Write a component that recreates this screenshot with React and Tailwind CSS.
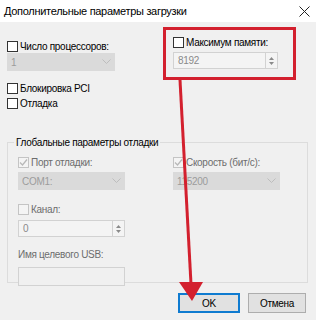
import React from 'react';

const Check = ({ checked, disabled }) => (
  <span
    className={`w-[11px] h-[11px] shrink-0 border flex items-center justify-center ${
      disabled ? 'border-[#c4c4c4] bg-[#f4f4f4]' : 'border-[#333] bg-white'
    }`}
  >
    {checked && (
      <svg width="9" height="9" viewBox="0 0 9 9">
        <path d="M1 4.5 L3.5 7 L8 1.5" fill="none" stroke="#b8b8b8" strokeWidth="1.3" />
      </svg>
    )}
  </span>
);

const CheckRow = ({ label, checked, disabled, className = '' }) => (
  <div className={`flex items-center gap-[2px] h-[12px] ${className}`}>
    <Check checked={checked} disabled={disabled} />
    <span className={disabled ? 'text-[#6d6d6d]' : 'text-black'}>{label}</span>
  </div>
);

const Select = ({ value, className = '' }) => (
  <div className={`h-[18px] bg-[#dadada] flex items-center justify-between px-[4px] ${className}`}>
    <span className="text-[#9c9c9c]">{value}</span>
    <svg width="9" height="6" viewBox="0 0 9 6">
      <path d="M0.5 0.5 L4.5 4.5 L8.5 0.5" fill="none" stroke="#bdbdbd" strokeWidth="1" />
    </svg>
  </div>
);

const Spin = ({ value, className = '' }) => (
  <div className={`h-[17px] bg-[#f4f4f4] border border-[#d2d2d2] flex items-center ${className}`}>
    <span className="flex-1 pl-[4px] text-[#8a8a8a]">{value}</span>
    <div className="w-[12px] h-full border-l border-[#d2d2d2] flex flex-col items-center justify-center gap-[2px]">
      <svg width="5" height="3" viewBox="0 0 5 3"><path d="M0 3 L2.5 0 L5 3 Z" fill="#8a8a8a" /></svg>
      <svg width="5" height="3" viewBox="0 0 5 3"><path d="M0 0 L2.5 3 L5 0 Z" fill="#8a8a8a" /></svg>
    </div>
  </div>
);

const App = () => {
  return (
    <div
      className="relative w-[316px] h-[320px] overflow-hidden bg-[#f0f0f0] text-[10px] leading-[13px] tracking-[-0.3px]"
      style={{ fontFamily: '"Liberation Sans", Arial, sans-serif' }}
    >
      {/* title bar */}
      <div className="h-[22px] bg-white flex items-center justify-between pl-[4px] pr-[6px]">
        <span className="text-[11px] text-black">Дополнительные параметры загрузки</span>
        <svg width="11" height="11" viewBox="0 0 11 11">
          <path d="M0.5 0.5 L10.5 10.5 M10.5 0.5 L0.5 10.5" stroke="#222" strokeWidth="1" />
        </svg>
      </div>

      <div className="px-[7px]">
        {/* top options */}
        <div className="flex pt-[5px] h-[114px]">
          <div className="w-[156px] pt-[13px]">
            <CheckRow label="Число процессоров:" />
            <Select value="1" className="w-[108px] mt-[1px]" />
            <CheckRow label="Блокировка PCI" className="mt-[11px]" />
            <CheckRow label="Отладка" className="mt-[3px]" />
          </div>
          <div className="w-[133px] h-[53px] border-[3px] border-[#d3202e] pl-[7px] pt-[6px]">
            <CheckRow label="Максимум памяти:" />
            <Spin value="8192" className="w-[105px] mt-[4px]" />
          </div>
        </div>

        {/* global debug settings */}
        <fieldset className="w-[301px] h-[147px] border border-[#dcdcdc] pl-[10px]">
          <legend className="ml-[-4px] px-[2px] text-black">Глобальные параметры отладки</legend>
          <div className="flex mt-[7px]">
            <div className="w-[155px]">
              <CheckRow label="Порт отладки:" checked disabled />
              <Select value="COM1:" className="w-[107px] mt-[4px]" />
            </div>
            <div>
              <CheckRow label="Скорость (бит/с):" checked disabled />
              <Select value="115200" className="w-[107px] mt-[4px]" />
            </div>
          </div>
          <CheckRow label="Канал:" disabled className="mt-[13px]" />
          <Spin value="0" className="w-[107px] mt-[5px]" />
          <div className="mt-[11px] text-[#6d6d6d]">Имя целевого USB:</div>
          <div className="w-[107px] h-[19px] mt-[6px] bg-[#f0f0f0] border border-[#d2d2d2]" />
        </fieldset>
      </div>

      {/* buttons */}
      <div className="flex justify-end gap-[8px] pr-[10px] mt-[10px]">
        <button className="w-[62px] h-[20px] bg-[#e1e1e1] border-2 border-[#0f7bd0] text-black text-[10px]">
          OK
        </button>
        <button className="w-[58px] h-[20px] bg-[#e1e1e1] border border-[#adadad] text-black text-[10px]">
          Отмена
        </button>
      </div>

      {/* annotation arrow */}
      <svg className="absolute left-0 top-0 pointer-events-none" width="316" height="320">
        <line x1="180" y1="80" x2="191" y2="284" stroke="#d3202e" strokeWidth="3" />
        <polygon points="179,282 203,282 192,301" fill="#d3202e" />
      </svg>
    </div>
  );
};

export default App;
